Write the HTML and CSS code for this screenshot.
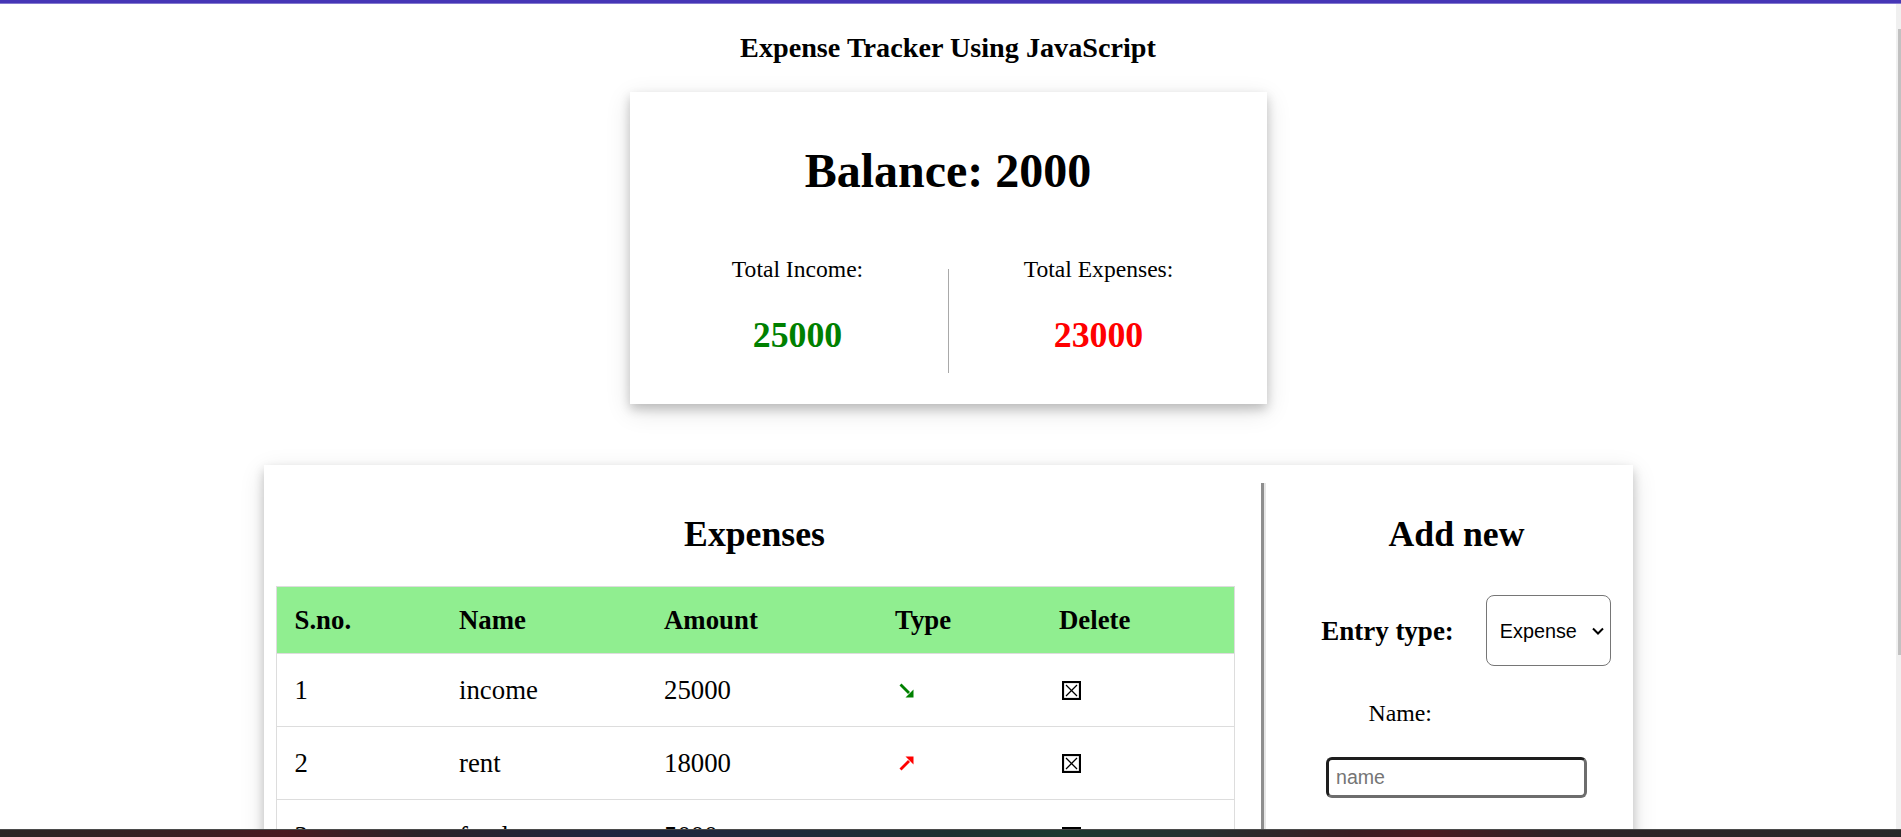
FILE: index.html
```html
<!DOCTYPE html>
<html lang="en">
<head>
<meta charset="utf-8">
<title>Expense Tracker Using JavaScript</title>
<link rel="stylesheet" href="styles.css">
</head>
<body>
<div class="topbar"></div>
<main class="page">
  <h3 class="title">Expense Tracker Using JavaScript</h3>

  <section class="balance-card">
    <h1 class="balance">Balance: 2000</h1>
    <div class="totals">
      <div class="total">
        <p class="total-label">Total Income:</p>
        <p class="total-value income">25000</p>
      </div>
      <div class="divider"></div>
      <div class="total">
        <p class="total-label">Total Expenses:</p>
        <p class="total-value expense">23000</p>
      </div>
    </div>
  </section>

  <section class="main-card">
    <div class="list">
      <h2 class="section-title">Expenses</h2>
      <table class="table">
        <colgroup>
          <col class="col-sno"><col class="col-name"><col class="col-amount"><col class="col-type"><col class="col-del">
        </colgroup>
        <thead>
          <tr><th>S.no.</th><th>Name</th><th>Amount</th><th>Type</th><th>Delete</th></tr>
        </thead>
        <tbody>
          <tr>
            <td>1</td><td>income</td><td>25000</td>
            <td><svg class="arrow" viewBox="0 0 15 15" width="15" height="15"><line x1="1.5" y1="1.5" x2="10" y2="10" stroke="#008000" stroke-width="2.8"/><polygon points="14.5,14.5 14.5,6.5 6.5,14.5" fill="#008000"/></svg></td>
            <td><svg class="del" viewBox="0 0 19 19" width="19" height="19"><rect x="1" y="1" width="17" height="17" fill="#fff" stroke="#000" stroke-width="2.2"/><line x1="4" y1="4" x2="15" y2="15" stroke="#000" stroke-width="1.3"/><line x1="15" y1="4" x2="4" y2="15" stroke="#000" stroke-width="1.3"/></svg></td>
          </tr>
          <tr>
            <td>2</td><td>rent</td><td>18000</td>
            <td><svg class="arrow" viewBox="0 0 15 15" width="15" height="15"><line x1="1.5" y1="13.5" x2="10" y2="5" stroke="#ff0000" stroke-width="2.8"/><polygon points="14.5,0.5 6.5,0.5 14.5,8.5" fill="#ff0000"/></svg></td>
            <td><svg class="del" viewBox="0 0 19 19" width="19" height="19"><rect x="1" y="1" width="17" height="17" fill="#fff" stroke="#000" stroke-width="2.2"/><line x1="4" y1="4" x2="15" y2="15" stroke="#000" stroke-width="1.3"/><line x1="15" y1="4" x2="4" y2="15" stroke="#000" stroke-width="1.3"/></svg></td>
          </tr>
          <tr>
            <td>3</td><td>food</td><td>5000</td>
            <td><svg class="arrow" viewBox="0 0 15 15" width="15" height="15"><line x1="1.5" y1="13.5" x2="10" y2="5" stroke="#ff0000" stroke-width="2.8"/><polygon points="14.5,0.5 6.5,0.5 14.5,8.5" fill="#ff0000"/></svg></td>
            <td><svg class="del" viewBox="0 0 19 19" width="19" height="19"><rect x="1" y="1" width="17" height="17" fill="#fff" stroke="#000" stroke-width="2.2"/><line x1="4" y1="4" x2="15" y2="15" stroke="#000" stroke-width="1.3"/><line x1="15" y1="4" x2="4" y2="15" stroke="#000" stroke-width="1.3"/></svg></td>
          </tr>
        </tbody>
      </table>
    </div>

    <div class="sep"></div>

    <form class="form">
      <h2 class="section-title">Add new</h2>
      <div class="entry-row">
        <label class="entry-label" for="type">Entry type:</label>
        <div class="select-wrap">
          <select class="select" id="type">
            <option>Expense</option>
            <option>Income</option>
          </select>
          <svg class="chevron" viewBox="0 0 12 8" width="12" height="8"><polyline points="1,1.5 6,6.5 11,1.5" fill="none" stroke="#000" stroke-width="2"/></svg>
        </div>
      </div>
      <label class="field-label" for="name">Name:</label>
      <input class="text-input" id="name" type="text" placeholder="name">
      <label class="field-label" for="amount">Amount:</label>
      <input class="text-input" id="amount" type="number" placeholder="amount">
    </form>
  </section>
</main>
<div class="scrollbar"><div class="thumb"></div></div>
<div class="taskbar"></div>
</body>
</html>
```

FILE: styles.css
```css
html, body {
  margin: 0;
  padding: 0;
  background: #ffffff;
}

body {
  font-family: "Liberation Serif", "Times New Roman", serif;
  color: #000;
  overflow: hidden;
  height: 837px;
}

.page {
  width: 1896px;
  padding-top: 32px;
}

.title {
  margin: 0;
  text-align: center;
  font-size: 28.2px;
  line-height: 32px;
  font-weight: bold;
}

/* balance card */
.balance-card {
  width: 637px;
  margin: 28px auto 0;
  box-sizing: border-box;
  padding: 51px 0 31px;
  background: #fff;
  box-shadow: 0 5px 10px rgba(0, 0, 0, 0.2), 0 7px 24px rgba(0, 0, 0, 0.12);
}

.balance {
  margin: 0;
  text-align: center;
  font-size: 48px;
  line-height: 56px;
  font-weight: bold;
}

.totals {
  display: flex;
  justify-content: center;
  align-items: flex-start;
  margin-top: 56px;
}

.total {
  width: 300px;
  text-align: center;
}

.total-label {
  margin: 0;
  font-size: 23.6px;
  line-height: 28px;
}

.total-value {
  margin: 32px 0 0;
  font-size: 35.8px;
  line-height: 40px;
  font-weight: bold;
}

.income { color: #008000; }
.expense { color: #ff0000; }

.divider {
  width: 1px;
  height: 104px;
  margin-top: 14px;
  background: #a9a9a9;
}

/* main card */
.main-card {
  width: 1369px;
  min-height: 520px;
  margin: 61px auto 0;
  box-sizing: border-box;
  padding-left: 12px;
  display: flex;
  align-items: stretch;
  background: #fff;
  box-shadow: 0 5px 10px rgba(0, 0, 0, 0.2), 0 7px 24px rgba(0, 0, 0, 0.12);
}

.list {
  width: 958px;
  padding-top: 48px;
}

.section-title {
  margin: 0;
  text-align: center;
  font-size: 35.7px;
  line-height: 42px;
  font-weight: bold;
}

.table {
  margin-top: 31px;
  width: 958px;
  table-layout: fixed;
  border-collapse: collapse;
  border: 1px solid #dddddd;
  font-size: 26.8px;
}

.col-sno { width: 165px; }
.col-name { width: 205px; }
.col-amount { width: 231px; }
.col-type { width: 164px; }
.col-del { width: 193px; }

.table th,
.table td {
  text-align: left;
  line-height: 32px;
  padding: 0 18px;
  vertical-align: middle;
}

.table th {
  height: 66px;
  background: #90ee90;
  font-weight: bold;
}

.table td {
  height: 72px;
  border-top: 1px solid #dddddd;
}

.arrow {
  display: block;
  margin-left: 4px;
}

.del {
  display: block;
  margin-left: 3px;
}

.sep {
  width: 0;
  margin-left: 27px;
  margin-top: 18px;
  border-left: 3px solid #8e8e8e;
  border-right: 2px solid #e6e6e6;
}

.form {
  flex: 1;
  margin: 0;
  padding: 48px 0 0 15px;
}

.entry-row {
  display: flex;
  align-items: center;
  justify-content: center;
  margin-top: 40px;
  padding-left: 19px;
}

.entry-label {
  font-weight: bold;
  font-size: 27px;
  line-height: 32px;
  margin-right: 32px;
}

.select-wrap {
  position: relative;
}

.select {
  display: block;
  appearance: none;
  -webkit-appearance: none;
  width: 125px;
  height: 71px;
  box-sizing: border-box;
  margin: 0;
  padding: 0 0 0 13px;
  border: 1px solid #767676;
  border-radius: 8px;
  background: #fff;
  color: #000;
  font-family: "Liberation Sans", Arial, sans-serif;
  font-size: 19.8px;
}

.chevron {
  position: absolute;
  right: 7px;
  top: 50%;
  margin-top: -4px;
  pointer-events: none;
}

.field-label {
  display: block;
  margin-top: 33px;
  padding-left: 88px;
  font-size: 23.8px;
  line-height: 28px;
}

.text-input {
  display: block;
  margin: 30px auto 0;
  width: 261px;
  height: 41px;
  box-sizing: border-box;
  padding: 0 7px;
  border-style: solid;
  border-width: 3px;
  border-color: #1e1e1e #6d6d6d #6d6d6d #1e1e1e;
  border-radius: 6px;
  font-family: "Liberation Sans", Arial, sans-serif;
  font-size: 19.6px;
  outline: none;
}

.text-input::placeholder {
  color: #757575;
}

/* browser chrome overlays */
.topbar {
  position: fixed;
  top: 0;
  left: 0;
  right: 0;
  height: 3px;
  background: #4636b6;
  border-bottom: 1px solid #8479cf;
  z-index: 5;
}

.scrollbar {
  position: fixed;
  top: 0;
  right: 0;
  bottom: 0;
  width: 5px;
  background: #f0f0f0;
  z-index: 4;
}

.thumb {
  position: absolute;
  right: 0;
  top: 29px;
  width: 3px;
  height: 626px;
  background: #c1c1c1;
}

.taskbar {
  position: fixed;
  left: 0;
  right: 0;
  bottom: 0;
  height: 7px;
  border-top: 1px solid #4b4b4b;
  background: linear-gradient(90deg, #2a2424 0%, #3d1c22 11%, #4a1820 15%, #2b2228 22%, #1f2540 32%, #1e2a3a 42%, #1b3030 50%, #1c3a30 56%, #253030 63%, #3a1c22 71%, #4a1820 75%, #2e2226 82%, #282828 100%);
  z-index: 6;
}
```
